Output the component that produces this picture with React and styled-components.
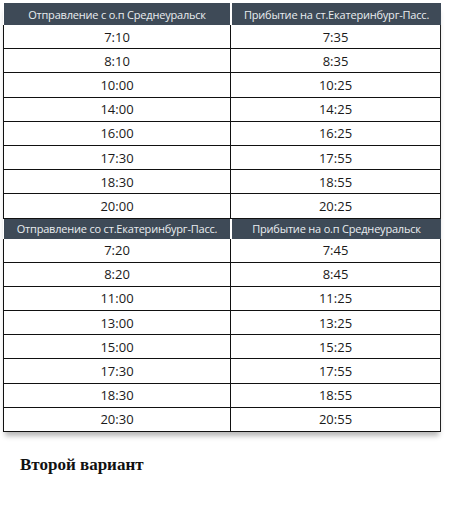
import React from 'react'
import styled, { createGlobalStyle } from 'styled-components';

const GlobalStyle = createGlobalStyle`
body {
  margin:0;
  background:#fff;
}
`;

const Page = styled.div`
width:450px;
height:520px;
padding:3px 0 0 3px;
box-sizing:border-box;
font-family:"Open Sans", "Noto Sans", sans-serif;
`;
const Sheet = styled.div`
width:438px;
box-shadow:0 6px 5px -2px rgba(0,0,0,0.28);
`;
const HeaderRow = styled.div`
display:grid;
grid-template-columns:226px 1fr;
gap:2px;
height:${props => props.h}px;
margin-left:1px;
`;
const HeaderCell = styled.div`
background:#3e4a57;
color:#e9edf0;
font-size:11px;
letter-spacing:-0.2px;
display:flex;
align-items:center;
justify-content:center;
white-space:nowrap;
`;
const Body = styled.div`
border-left:1.5px solid #111;
border-right:1.5px solid #222;
`;
const Row = styled.div`
display:grid;
grid-template-columns:226px 1fr;
height:24.2px;
box-sizing:border-box;
border-bottom:1.5px solid #111;
`;
const Cell = styled.div`
display:flex;
align-items:center;
justify-content:center;
font-size:13px;
color:#1a1a1a;
border-left:${props => props.divider ? '1.5px solid #111' : 'none'};
`;
const Caption = styled.div`
margin:23px 0 0 17px;
font-family:"Liberation Serif", "Times New Roman", serif;
font-weight:700;
font-size:17px;
color:#111;
`;

const tables = [
  {
    from:"Отправление с о.п Среднеуральск",
    to:"Прибытие на ст.Екатеринбург-Пасс.",
    h:22,
    rows:[["7:10","7:35"],["8:10","8:35"],["10:00","10:25"],["14:00","14:25"],["16:00","16:25"],["17:30","17:55"],["18:30","18:55"],["20:00","20:25"]]
  },
  {
    from:"Отправление со ст.Екатеринбург-Пасс.",
    to:"Прибытие на о.п Среднеуральск",
    h:20,
    rows:[["7:20","7:45"],["8:20","8:45"],["11:00","11:25"],["13:00","13:25"],["15:00","15:25"],["17:30","17:55"],["18:30","18:55"],["20:30","20:55"]]
  }
];

export default function App() {
    const renderTable = (table, index) => {
        return (
            <React.Fragment key={index}>
                <HeaderRow h={table.h}>
                    <HeaderCell>{table.from}</HeaderCell>
                    <HeaderCell>{table.to}</HeaderCell>
                </HeaderRow>
                <Body>
                    {table.rows.map((row, i) => (
                        <Row key={i}>
                            <Cell>{row[0]}</Cell>
                            <Cell divider>{row[1]}</Cell>
                        </Row>
                    ))}
                </Body>
            </React.Fragment>
        )
    }
    return (
        <Page>
            <GlobalStyle />
            <Sheet>
                {tables.map(renderTable)}
            </Sheet>
            <Caption>Второй вариант</Caption>
        </Page>
    )
}
